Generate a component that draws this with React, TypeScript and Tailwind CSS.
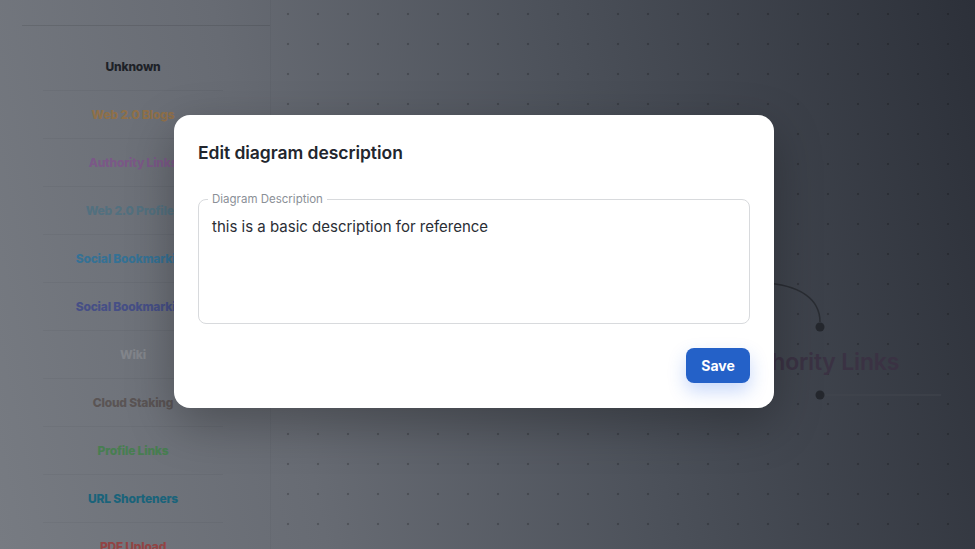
import { useState } from "react";

const LINK_TYPES: { label: string; color: string }[] = [
  { label: "Unknown", color: "text-[#1e2228]" },
  { label: "Web 2.0 Blogs", color: "text-[#8f7049]" },
  { label: "Authority Links", color: "text-[#7b5887]" },
  { label: "Web 2.0 Profiles", color: "text-[#52707f]" },
  { label: "Social Bookmarking", color: "text-[#357194]" },
  { label: "Social Bookmarking", color: "text-[#464f86]" },
  { label: "Wiki", color: "text-[#82858b]" },
  { label: "Cloud Staking", color: "text-[#5a5454]" },
  { label: "Profile Links", color: "text-[#487e51]" },
  { label: "URL Shorteners", color: "text-[#1a637a]" },
  { label: "PDF Upload", color: "text-[#924444]" },
];

function Sidebar() {
  return (
    <aside className="w-[270px] shrink-0 pt-[25px]">
      <div className="ml-[22px] border-t border-black/10" />
      <div className="ml-[43px] mr-[47px] pt-[17px]">
        {LINK_TYPES.map((item, i) => (
          <div
            key={i}
            className="h-[48px] flex items-center justify-center border-b border-black/[0.04]"
          >
            <span className={`whitespace-nowrap text-[12px] font-extrabold tracking-[-0.2px] ${item.color}`}>
              {item.label}
            </span>
          </div>
        ))}
      </div>
    </aside>
  );
}

function Canvas() {
  return (
    <div className="relative flex-1 border-l border-black/[0.03] bg-[radial-gradient(circle,rgba(0,0,0,0.2)_1.2px,transparent_1.6px)] bg-[length:30px_30px] bg-[position:2px_-1px]">
      <svg
        className="absolute left-0 top-0"
        width="705"
        height="549"
        viewBox="270 0 705 549"
      >
        <path
          d="M 430 283 L 760 283 C 800 284, 819 300, 819 322"
          fill="none"
          stroke="#2a2d33"
          strokeWidth="1.5"
        />
        <path d="M 824 395 L 940 395" stroke="#42464e" strokeWidth="1" />
        <circle cx="819" cy="327" r="4.5" fill="#25282e" />
        <circle cx="819" cy="395" r="4.5" fill="#25282e" />
      </svg>
      <div className="absolute left-[425px] top-[346px] w-[240px] text-center">
        <span className="text-[23px] font-semibold leading-[32px] tracking-[-0.2px] text-[#3a3243]">
          Authority Links
        </span>
      </div>
    </div>
  );
}

function EditDescriptionModal() {
  const [description, setDescription] = useState(
    "this is a basic description for reference"
  );

  return (
    <div className="absolute left-[174px] top-[115px] w-[600px] rounded-2xl bg-white px-6 pt-[26px] pb-[25px] shadow-[0_16px_48px_rgba(0,0,0,0.28)]">
      <h2 className="text-[17.5px] leading-[24px] font-semibold tracking-[-0.05px] text-[#22262d]">
        Edit diagram description
      </h2>

      <div className="relative mt-[34px] h-[125px] rounded-lg border border-[#d8dadd]">
        <label className="absolute -top-[8px] left-[9px] bg-white px-1 text-[11.5px] leading-[14px] text-[#8b9097]">
          Diagram Description
        </label>
        <textarea
          className="block h-full w-full resize-none rounded-lg bg-transparent px-[13px] pt-[16px] text-[15px] leading-[22px] text-[#2a2e35] outline-none"
          value={description}
          onChange={(e) => setDescription(e.target.value)}
        />
      </div>

      <div className="mt-6 flex justify-end">
        <button className="h-[35px] w-[64px] rounded-lg bg-[#2461c8] text-[14px] font-bold text-white shadow-[0_8px_18px_rgba(37,99,235,0.25)]">
          Save
        </button>
      </div>
    </div>
  );
}

export default function App() {
  return (
    <div
      className="relative flex h-[549px] w-[975px] overflow-hidden bg-[linear-gradient(78deg,#777b82_0%,#676b73_30%,#4b5059_62%,#2c3039_100%)]"
      style={{ fontFamily: "Inter, Lato, sans-serif" }}
    >
      <Sidebar />
      <Canvas />
      <EditDescriptionModal />
    </div>
  );
}
